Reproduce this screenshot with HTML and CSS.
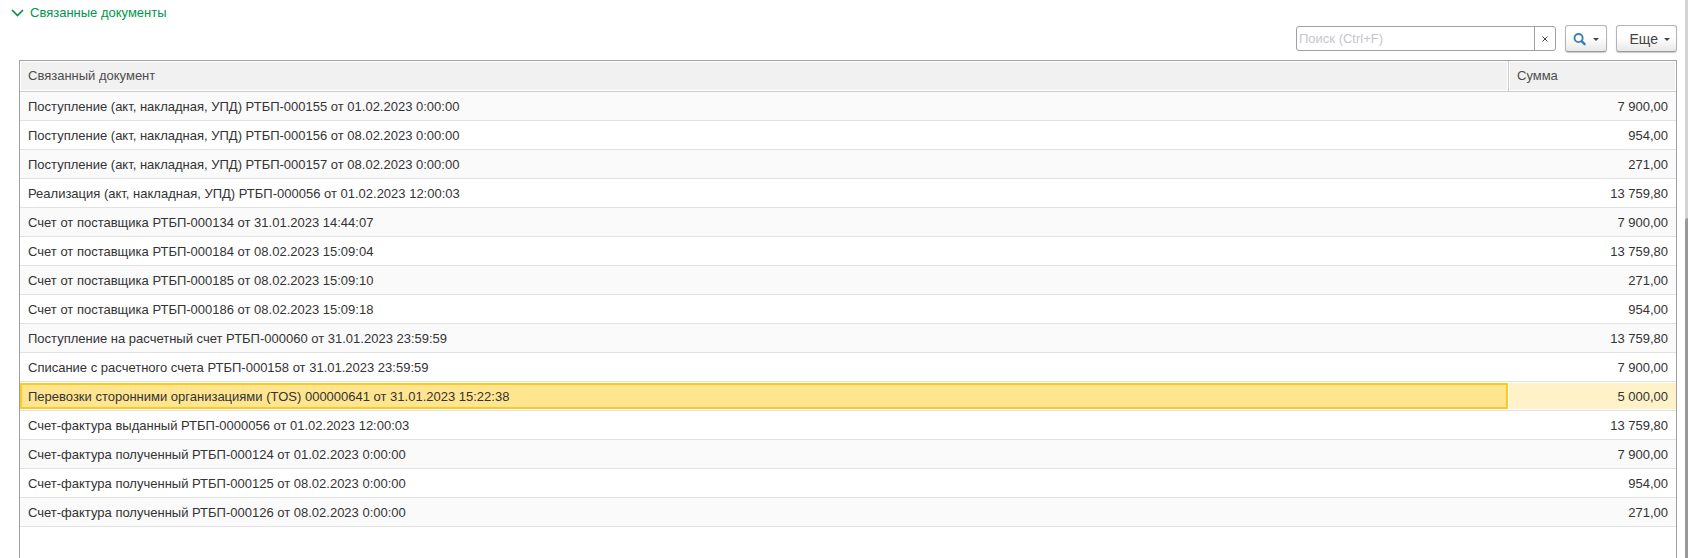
FILE: index.html
```
<!DOCTYPE html>
<html lang="ru">
<head>
<meta charset="utf-8">
<title>Связанные документы</title>
<link rel="stylesheet" href="styles.css">
</head>
<body>
<div class="page">
  <main class="content">
    <button class="group-title" type="button" aria-expanded="true">
      <svg class="chevron" width="13" height="8" viewBox="0 0 13 8" aria-hidden="true"><path d="M1 1l5.500 5.500L12 1" fill="none" stroke="currentColor" stroke-width="1.7"/></svg>
      <span>Связанные документы</span>
    </button>
    <div class="toolbar">
      <div class="search">
        <input class="search-input" type="text" placeholder="Поиск (Ctrl+F)" aria-label="Поиск">
        <button class="search-clear" type="button" aria-label="Очистить"><svg width="6" height="6" viewBox="0 0 6 6" aria-hidden="true"><path d="M.5.5l5 5M5.500.5l-5 5" stroke="currentColor" stroke-width="1"/></svg></button>
      </div>
      <button class="button button-find" type="button" aria-label="Найти">
        <svg width="14" height="14" viewBox="0 0 14 14" aria-hidden="true"><circle cx="6" cy="6" r="4.400" fill="none" stroke="#3a80ae" stroke-width="2"/><path d="M9.500 9.500l3 3" stroke="#3a80ae" stroke-width="2.600" stroke-linecap="round"/></svg>
        <svg class="caret" width="6" height="5" viewBox="0 0 6 5" aria-hidden="true"><path d="M0 2h6L3 5z" fill="currentColor"/></svg>
      </button>
      <button class="button button-more" type="button">
        <span>Еще</span>
        <svg class="caret" width="6" height="5" viewBox="0 0 6 5" aria-hidden="true"><path d="M0 2h6L3 5z" fill="currentColor"/></svg>
      </button>
    </div>
    <div class="grid">
      <table class="documents">
        <thead>
          <tr><th scope="col"><div class="head">Связанный документ</div></th><th class="sum" scope="col"><div class="head">Сумма</div></th></tr>
        </thead>
        <tbody>
          <tr><td>Поступление (акт, накладная, УПД) РТБП-000155 от 01.02.2023 0:00:00</td><td>7 900,00</td></tr>
          <tr><td>Поступление (акт, накладная, УПД) РТБП-000156 от 08.02.2023 0:00:00</td><td>954,00</td></tr>
          <tr><td>Поступление (акт, накладная, УПД) РТБП-000157 от 08.02.2023 0:00:00</td><td>271,00</td></tr>
          <tr><td>Реализация (акт, накладная, УПД) РТБП-000056 от 01.02.2023 12:00:03</td><td>13 759,80</td></tr>
          <tr><td>Счет от поставщика РТБП-000134 от 31.01.2023 14:44:07</td><td>7 900,00</td></tr>
          <tr><td>Счет от поставщика РТБП-000184 от 08.02.2023 15:09:04</td><td>13 759,80</td></tr>
          <tr><td>Счет от поставщика РТБП-000185 от 08.02.2023 15:09:10</td><td>271,00</td></tr>
          <tr><td>Счет от поставщика РТБП-000186 от 08.02.2023 15:09:18</td><td>954,00</td></tr>
          <tr><td>Поступление на расчетный счет РТБП-000060 от 31.01.2023 23:59:59</td><td>13 759,80</td></tr>
          <tr><td>Списание с расчетного счета РТБП-000158 от 31.01.2023 23:59:59</td><td>7 900,00</td></tr>
          <tr class="selected"><td><div class="mark current">Перевозки сторонними организациями (TOS) 000000641 от 31.01.2023 15:22:38</div></td><td><div class="mark">5 000,00</div></td></tr>
          <tr><td>Счет-фактура выданный РТБП-0000056 от 01.02.2023 12:00:03</td><td>13 759,80</td></tr>
          <tr><td>Счет-фактура полученный РТБП-000124 от 01.02.2023 0:00:00</td><td>7 900,00</td></tr>
          <tr><td>Счет-фактура полученный РТБП-000125 от 08.02.2023 0:00:00</td><td>954,00</td></tr>
          <tr><td>Счет-фактура полученный РТБП-000126 от 08.02.2023 0:00:00</td><td>271,00</td></tr>
        </tbody>
      </table>
    </div>
  </main>
  <div class="scroll-track"><div class="scroll-thumb"></div></div>
</div>
</body>
</html>
```
FILE: styles.css
```
* { box-sizing: border-box; }

body {
  margin: 0;
  background: #fff;
  color: #333;
  font: 13px/16px "Liberation Sans", Arial, sans-serif;
}

button, input { font: inherit; color: inherit; }

.page {
  display: flex;
  height: 100vh;
  overflow: hidden;
}

.content {
  flex: 1;
  min-width: 0;
  display: flex;
  flex-direction: column;
  padding: 5px 8px 0 11px;
}

.group-title {
  align-self: flex-start;
  display: flex;
  align-items: center;
  gap: 6px;
  padding: 0;
  border: 0;
  background: none;
  color: #00974c;
}

.toolbar {
  display: flex;
  justify-content: flex-end;
  align-items: center;
  gap: 9px;
  padding: 4px 0 8px;
}

.search {
  display: flex;
  width: 260px;
  height: 25px;
  border: 1px solid #a0a0a0;
  border-radius: 3px;
  background: #fff;
}

.search-input {
  flex: 1;
  min-width: 0;
  padding: 0 2px;
  border: 0;
  outline: 0;
  background: none;
}

.search-input::placeholder { color: #c6c6cc; opacity: 1; }

.search-clear {
  display: flex;
  align-items: center;
  justify-content: center;
  width: 21px;
  padding: 0;
  border: 0;
  border-left: 1px solid #a0a0a0;
  background: none;
  color: #444;
}

.button {
  display: flex;
  align-items: center;
  height: 27px;
  padding: 0 7px;
  border: 1px solid #b4b4b4;
  border-bottom-color: #999;
  border-radius: 3px;
  background: linear-gradient(#fff 45%, #e8e8e8);
  box-shadow: 0 1px 1px #ccc;
  color: #444;
}

.button-find { gap: 7px; width: 42px; }

.button-more {
  justify-content: flex-end;
  gap: 6px;
  width: 61px;
  padding: 0 6px;
  font-size: 14px;
}

.caret { flex: none; }

.grid {
  flex: 1;
  min-height: 0;
  margin-left: 8px;
  border: 1px solid #a0a0a0;
  border-bottom: 0;
}

.documents {
  width: 100%;
  border-collapse: separate;
  border-spacing: 0;
  table-layout: fixed;
}

th {
  padding: 1px;
  border-bottom: 1px solid #ccc;
  color: #4d4d4d;
  font-weight: 400;
  text-align: left;
}

.sum { width: 168px; border-left: 1px solid #ccc; }

.head { padding: 6px 7px; background: #f1f1f1; }

td {
  height: 29px;
  padding: 2px 8px 0;
  border-bottom: 1px solid #e2e2e2;
  white-space: nowrap;
}

td:last-child { text-align: right; }

tbody tr:nth-child(odd) td { background: #fafafa; }

tbody tr.selected td { padding: 1px 0; background: #fff; }

tbody tr.selected td:last-child { padding-left: 1px; }

.mark { padding: 6px 8px 4px; background: #fff2c8; }

.mark.current {
  padding: 4px 6px 2px;
  border: 2px solid #fcca21;
  background: #ffe590;
}

.scroll-track {
  width: 3px;
  padding-top: 218px;
  background: #d4d4d4;
}

.scroll-thumb {
  height: 100%;
  border-top-left-radius: 3px;
  background: #999;
}
```
